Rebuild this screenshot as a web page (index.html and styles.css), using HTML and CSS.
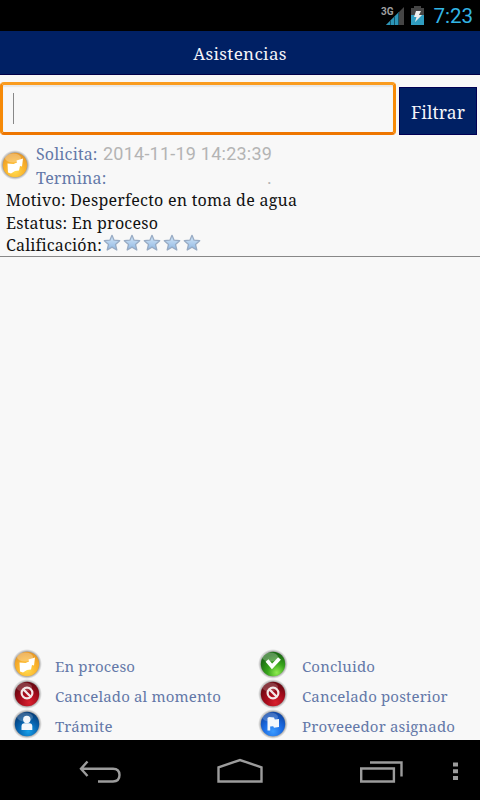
FILE: index.html
```html
<!DOCTYPE html>
<html lang="es">

<head>
    <meta charset="UTF-8">
    <meta name="viewport" content="width=device-width, initial-scale=1.0">
    <title>Asistencias</title>
    <link rel="stylesheet" href="styles.css">
</head>

<body>
    <!-- Shared icon shapes -->
    <svg class="defs" width="0" height="0">
        <defs>
            <radialGradient id="orange" cx="50%" cy="75%" r="70%">
                <stop offset="0" stop-color="#ffdc50"/>
                <stop offset="0.55" stop-color="#fbb42c"/>
                <stop offset="1" stop-color="#e89a28"/>
            </radialGradient>
            <radialGradient id="red" cx="60%" cy="85%" r="75%">
                <stop offset="0" stop-color="#d8202e"/>
                <stop offset="0.5" stop-color="#a80c1c"/>
                <stop offset="1" stop-color="#6c0812"/>
            </radialGradient>
            <radialGradient id="blue" cx="55%" cy="80%" r="75%">
                <stop offset="0" stop-color="#18a0e8"/>
                <stop offset="0.5" stop-color="#0868b4"/>
                <stop offset="1" stop-color="#043c78"/>
            </radialGradient>
            <radialGradient id="royal" cx="50%" cy="80%" r="75%">
                <stop offset="0" stop-color="#3c9cff"/>
                <stop offset="0.5" stop-color="#1c6ce4"/>
                <stop offset="1" stop-color="#1048a8"/>
            </radialGradient>
            <radialGradient id="green" cx="65%" cy="85%" r="75%">
                <stop offset="0" stop-color="#90ec50"/>
                <stop offset="0.5" stop-color="#38a41c"/>
                <stop offset="1" stop-color="#1c6c14"/>
            </radialGradient>
            <radialGradient id="halo">
                <stop offset="0.78" stop-color="#666" stop-opacity="0.75"/>
                <stop offset="1" stop-color="#999" stop-opacity="0"/>
            </radialGradient>
            <linearGradient id="star-fill" x1="0" y1="0" x2="0" y2="1">
                <stop offset="0" stop-color="#d6e8f8"/>
                <stop offset="1" stop-color="#90b8e4"/>
            </linearGradient>
            <symbol id="proceso" viewBox="0 0 30 30">
                <circle cx="15" cy="15" r="15" fill="url(#halo)"/>
                <circle cx="15" cy="15" r="12.2" fill="url(#orange)"/>
                <ellipse cx="13" cy="8" rx="8" ry="4.5" fill="#fff" opacity="0.28"/>
                <path d="M7.500 13.500l6 .5 3.500-1.500-.5-2 6.500-2-1 8-2-.5-1 4.500-4 .5-4 2.500-3-1z" fill="#fff"/>
            </symbol>
            <symbol id="cancelado" viewBox="0 0 30 30">
                <circle cx="15" cy="15" r="15" fill="url(#halo)"/>
                <circle cx="15" cy="15" r="12.2" fill="url(#red)"/>
                <ellipse cx="12" cy="8" rx="8" ry="4.5" fill="#fff" opacity="0.2"/>
                <circle cx="15" cy="14" r="5.4" fill="none" stroke="#f4e8e8" stroke-width="2.2"/>
                <path d="M11.5 10.5l7 7" stroke="#f4e8e8" stroke-width="2.4"/>
            </symbol>
            <symbol id="tramite" viewBox="0 0 30 30">
                <circle cx="15" cy="15" r="15" fill="url(#halo)"/>
                <circle cx="15" cy="15" r="12.2" fill="url(#blue)"/>
                <ellipse cx="13" cy="8" rx="8" ry="4.5" fill="#fff" opacity="0.2"/>
                <circle cx="14.8" cy="10.5" r="3.7" fill="#f4f8fc"/>
                <path d="M9.5 21v-3.500q0-3.200 3-3.200h4.800q3 0 3 3.200v3.500z" fill="#f4f8fc"/>
            </symbol>
            <symbol id="concluido" viewBox="0 0 30 30">
                <circle cx="15" cy="15" r="15" fill="url(#halo)"/>
                <circle cx="15" cy="15" r="12.2" fill="url(#green)"/>
                <ellipse cx="12" cy="8" rx="8" ry="4.5" fill="#fff" opacity="0.28"/>
                <path d="M9 11.500l5 6L21.500 9.500" fill="none" stroke="#fff" stroke-width="3.8"/>
            </symbol>
            <symbol id="asignado" viewBox="0 0 30 30">
                <circle cx="15" cy="15" r="15" fill="url(#halo)"/>
                <circle cx="15" cy="15" r="12.2" fill="url(#royal)"/>
                <ellipse cx="12" cy="8" rx="8" ry="4.500" fill="#fff" opacity="0.2"/>
                <path d="M9.500 9l1.500-1 5 .5.8 2 4.200-.6v8.200l-5 .7-.8-1.600-3 .2v4H9.500z" fill="#f4f8fc"/>
            </symbol>
            <symbol id="star" viewBox="0 0 18 18">
                <path d="M9 1.300l2.100 4.900 5.600.5-4.200 3.700 1.300 5.600L9 13.100 4.200 16l1.300-5.600L1.300 6.700l5.600-.5z" fill="url(#star-fill)" stroke="#98abc4" stroke-width="1.300" stroke-linejoin="round"/>
            </symbol>
        </defs>
    </svg>

    <div class="status-bar">
        <svg width="25" height="22" viewBox="0 0 25 22">
            <path d="M24 2v18H6z" fill="#454545"/>
            <path d="M19 7v13H6z" fill="#2b95b8"/>
            <path d="M10.500 15v5M14.500 11v9M18.500 7v13" stroke="#145268"/>
            <text class="network" x="1" y="9.500">3G</text>
        </svg>
        <svg class="battery" width="13" height="20" viewBox="0 0 13 20">
            <path d="M0 2h3V0h7v2h3v17H0z" fill="#454545"/>
            <path d="M0 9h13v10H0z" fill="#2f9cc0"/>
            <path d="M5 5h5L8 9h3l-7 7 1.500-5H3z" fill="#eee"/>
        </svg>
        <span class="clock">7:23</span>
    </div>

    <div class="title-bar">Asistencias</div>

    <div class="search">
        <div class="search-input"><span class="cursor"></span></div>
        <div class="filter-button">Filtrar</div>
    </div>

    <div class="request">
        <div class="request-head">
            <svg class="request-icon" width="30" height="30"><use href="#proceso"/></svg>
            <div class="dates">
                <div class="date-row"><span class="label">Solicita:</span><span class="date">2014-11-19 14:23:39</span></div>
                <div class="date-row"><span class="label">Termina:</span><span class="date no-date">.</span></div>
            </div>
        </div>
        <div class="detail">Motivo: Desperfecto en toma de agua</div>
        <div class="detail">Estatus: En proceso</div>
        <div class="detail rating">
            <span>Calificación:</span>
            <div class="stars">
                <svg width="18" height="18"><use href="#star"/></svg>
                <svg width="18" height="18"><use href="#star"/></svg>
                <svg width="18" height="18"><use href="#star"/></svg>
                <svg width="18" height="18"><use href="#star"/></svg>
                <svg width="18" height="18"><use href="#star"/></svg>
            </div>
        </div>
    </div>

    <div class="legend">
        <div class="legend-item"><svg width="30" height="30"><use href="#proceso"/></svg><span>En proceso</span></div>
        <div class="legend-item"><svg width="30" height="30"><use href="#concluido"/></svg><span>Concluido</span></div>
        <div class="legend-item"><svg width="30" height="30"><use href="#cancelado"/></svg><span>Cancelado al momento</span></div>
        <div class="legend-item"><svg width="30" height="30"><use href="#cancelado"/></svg><span>Cancelado posterior</span></div>
        <div class="legend-item"><svg width="30" height="30"><use href="#tramite"/></svg><span>Trámite</span></div>
        <div class="legend-item"><svg width="30" height="30"><use href="#asignado"/></svg><span>Proveeedor asignado</span></div>
    </div>

    <div class="nav-bar">
        <svg width="480" height="60" viewBox="0 0 480 60" fill="none" stroke="#9c9c9c" stroke-width="2.400">
            <path d="M87.500 21.500L81 28.700l6.500 7.300M81 28.700h32q6.500 0 6.500 6.400t-6.500 6.400H98"/>
            <path d="M218.500 41.500V27.300L240 20l21.500 7.300v14.200z"/>
            <path d="M361.200 28.500h32.700v13h-32.700zM370 22.500h31.500v14"/>
            <path d="M453 24.500h5M453 31.300h5M453 38h5" stroke-width="4"/>
        </svg>
    </div>
</body>

</html>
```
FILE: styles.css
```css
body {
    font-family: "Droid Serif", "Noto Serif", "DejaVu Serif Condensed", "DejaVu Serif", serif;
    font-size: 16px;
    background-color: #f8f8f8;
    color: #111111;
    margin: 0;
    height: 800px;
    display: flex;
    flex-direction: column;
    overflow: hidden;
    white-space: nowrap;
}

svg {
    display: block;
    flex: none;
}

.defs {
    position: absolute;
}

.status-bar {
    height: 31px;
    background-color: #000000;
    display: flex;
    align-items: center;
    justify-content: flex-end;
    padding-right: 7px;
    box-sizing: border-box;
}

.network {
    font: bold 10px Roboto, sans-serif;
    fill: #a0a0a0;
    stroke: #000000;
    stroke-width: 1.5px;
    paint-order: stroke;
}

.battery {
    margin-left: 6px;
}

.clock {
    font-family: Roboto, sans-serif;
    font-size: 20.5px;
    color: #33b5e5;
    margin-left: 9px;
}

.title-bar {
    height: 44px;
    line-height: 45px;
    box-sizing: border-box;
    background-color: #002064;
    border-bottom: 1px solid #000048;
    color: #f4f4f8;
    font-size: 17px;
    letter-spacing: 0.35px;
    text-align: center;
}

.search {
    display: flex;
    padding-top: 7px;
    height: 53px;
}

.search-input {
    width: 396px;
    height: 53px;
    box-sizing: border-box;
    border: 3px solid #f68a08;
    border-top-color: #fa9c20;
    border-bottom-color: #ee7600;
    border-radius: 4px;
    box-shadow: inset 0 2px 1px #e8e8e8;
    padding: 8px 10px;
}

.cursor {
    display: block;
    width: 1px;
    height: 31px;
    background-color: #888888;
}

.filter-button {
    width: 78px;
    height: 48px;
    line-height: 50px;
    margin: 5px 0 0 3px;
    background-color: #002064;
    box-shadow: inset 0 0 0 1px #000054;
    color: #f4f4f8;
    font-size: 17.5px;
    letter-spacing: 0.1px;
    text-align: center;
}

.request {
    height: 121px;
    border-bottom: 1px solid #888888;
}

.request-head {
    display: flex;
    height: 54px;
}

.request-icon {
    margin-top: 15px;
}

.dates {
    padding: 7px 0 0 6px;
}

.date-row {
    display: flex;
    height: 24px;
    line-height: 24px;
}

.label {
    width: 67px;
    color: #6478a8;
    letter-spacing: 0.15px;
}

.date {
    font-family: Roboto, sans-serif;
    font-size: 18px;
    letter-spacing: 0.23px;
    color: #b4b4b4;
}

.no-date {
    padding-left: 164px;
}

.detail {
    padding-left: 6px;
    height: 22.5px;
    line-height: 22.5px;
    letter-spacing: 0.25px;
}

.rating {
    display: flex;
    letter-spacing: 0.15px;
}

.stars {
    display: flex;
    gap: 2px;
    margin-left: 1px;
}

.legend {
    margin-top: auto;
    display: grid;
    grid-template-columns: 246px 1fr;
    grid-auto-rows: 30px;
    height: 91px;
    padding-left: 12px;
    color: #6478a8;
    font-size: 15px;
    letter-spacing: 0.14px;
}

.legend-item {
    display: flex;
    align-items: center;
    gap: 13px;
}

.legend-item:nth-child(even) {
    gap: 14px;
}

.legend-item span {
    padding-top: 4px;
}

.nav-bar {
    height: 60px;
    background-color: #000000;
}
```
